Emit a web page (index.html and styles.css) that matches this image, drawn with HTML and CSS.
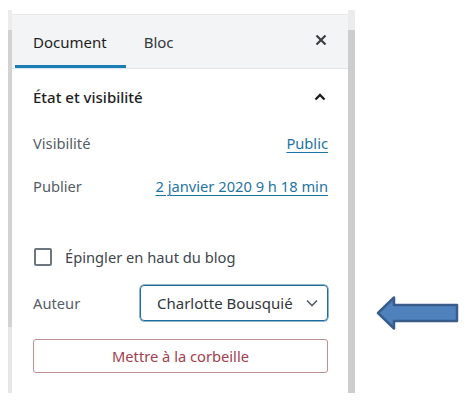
FILE: index.html
```html
<!DOCTYPE html>
<html lang="fr">
<head>
<meta charset="utf-8">
<link rel="stylesheet" href="styles.css">
</head>
<body>
<div class="frame">
  <div class="bar bar-left"></div>
  <div class="panel">
    <div class="tabs">
      <div class="tab active">Document</div>
      <div class="tab">Bloc</div>
      <div class="spacer"></div>
      <div class="close">
        <svg width="12" height="12" viewBox="0 0 12 12"><path d="M1.5 1.5L10.5 10.5M10.5 1.5L1.5 10.5" stroke="#3a3f44" stroke-width="2.2" fill="none"/></svg>
      </div>
    </div>
    <div class="content">
      <div class="section-title">
        <span>État et visibilité</span>
        <svg width="12" height="8" viewBox="0 0 12 8"><path d="M1.5 6.5L6 2L10.5 6.5" stroke="#1e1e1e" stroke-width="2.4" fill="none"/></svg>
      </div>
      <div class="row">
        <span class="label">Visibilité</span>
        <span class="link">Public</span>
      </div>
      <div class="row row-publish">
        <span class="label">Publier</span>
        <span class="link">2 janvier 2020 9 h 18 min</span>
      </div>
      <div class="check-row">
        <span class="checkbox"></span>
        <span class="check-label">Épingler en haut du blog</span>
      </div>
      <div class="row row-author">
        <span class="label">Auteur</span>
        <div class="select">
          <span>Charlotte Bousquié</span>
          <svg width="12" height="8" viewBox="0 0 12 8"><path d="M1 1.5L6 6.5L11 1.5" stroke="#555d66" stroke-width="1.6" fill="none"/></svg>
        </div>
      </div>
      <div class="trash">Mettre à la corbeille</div>
    </div>
  </div>
  <div class="bar bar-right"></div>
</div>
<svg class="arrow" width="84" height="36" viewBox="0 0 84 36"><path d="M2 17L18 1.5L18 9L81 9L81 25L18 25L18 32.5Z" fill="#4f81bd" stroke="#385d8a" stroke-width="2.5" stroke-linejoin="round"/></svg>
</body>
</html>
```
FILE: styles.css
```css
* { box-sizing: border-box; }
html, body { margin: 0; padding: 0; background: #fff; }
body {
  width: 465px;
  height: 410px;
  display: flex;
  align-items: flex-start;
  font-family: "Noto Sans", "Open Sans", sans-serif;
  font-size: 14.7px;
  color: #1e1e1e;
  overflow: hidden;
}
.frame {
  margin: 10px 0 0 8px;
  width: 347px;
  height: 383px;
  display: flex;
}
.bar { flex: none; }
.bar-left {
  width: 4px;
  background: linear-gradient(#ececec 0 20px, #d2d2d2 20px 317px, #e6e6e6 317px);
}
.bar-right {
  width: 7px;
  background: linear-gradient(#ececec 0 20px, #cdcdcd 20px);
}
.panel {
  flex: 1;
  background: #fff;
  padding-top: 4px;
}
.tabs {
  height: 55px;
  display: flex;
  align-items: stretch;
  background: #f3f4f5;
  border-top: 1px solid #e6e8ea;
  border-bottom: 1px solid #e2e4e7;
  padding-left: 3px;
}
.tab {
  display: flex;
  align-items: center;
  padding: 3px 19px 0 18px;
  font-size: 15px;
  color: #32373c;
  border-bottom: 3px solid transparent;
}
.tab.active {
  color: #1e1e1e;
  border-bottom-color: #1b7db3;
}
.spacer { flex: 1; }
.close {
  width: 24px;
  display: flex;
  align-items: center;
  justify-content: center;
  margin-right: 15px;
  padding-bottom: 4px;
}
.content {
  padding: 0 20px 0 21px;
  display: flex;
  flex-direction: column;
}
.section-title {
  height: 56px;
  display: flex;
  align-items: center;
  justify-content: space-between;
  font-size: 15px;
  font-weight: 500;
  color: #1e1e1e;
  padding-right: 2px;
}
.row {
  height: 36px;
  display: flex;
  align-items: center;
  justify-content: space-between;
}
.row-publish { margin-top: 7px; }
.label { color: #555d66; }
.link {
  color: #1f74a3;
  text-decoration: underline;
  text-underline-offset: 3px;
}
.check-row {
  height: 36px;
  margin-top: 35px;
  display: flex;
  align-items: center;
  gap: 13px;
}
.checkbox {
  width: 18px;
  height: 18px;
  border: 2px solid #6c7781;
  border-radius: 2px;
  margin-left: 1px;
}
.check-label { color: #40464d; }
.row-author { margin-top: 10px; }
.select {
  width: 188px;
  height: 36px;
  border: 1.5px solid #1f6d9c;
  border-radius: 4px;
  box-shadow: 0 0 0 0.5px #1f6d9c;
  display: flex;
  align-items: center;
  justify-content: space-between;
  padding: 0 9px 0 16px;
  color: #32373c;
  font-size: 15px;
}
.trash {
  margin-top: 18px;
  height: 34px;
  border: 1.5px solid #c08e95;
  border-radius: 3px;
  display: flex;
  align-items: center;
  justify-content: center;
  color: #a2404d;
  font-size: 14.7px;
}
.arrow {
  margin: 296px 0 0 21px;
  flex: none;
}
```
